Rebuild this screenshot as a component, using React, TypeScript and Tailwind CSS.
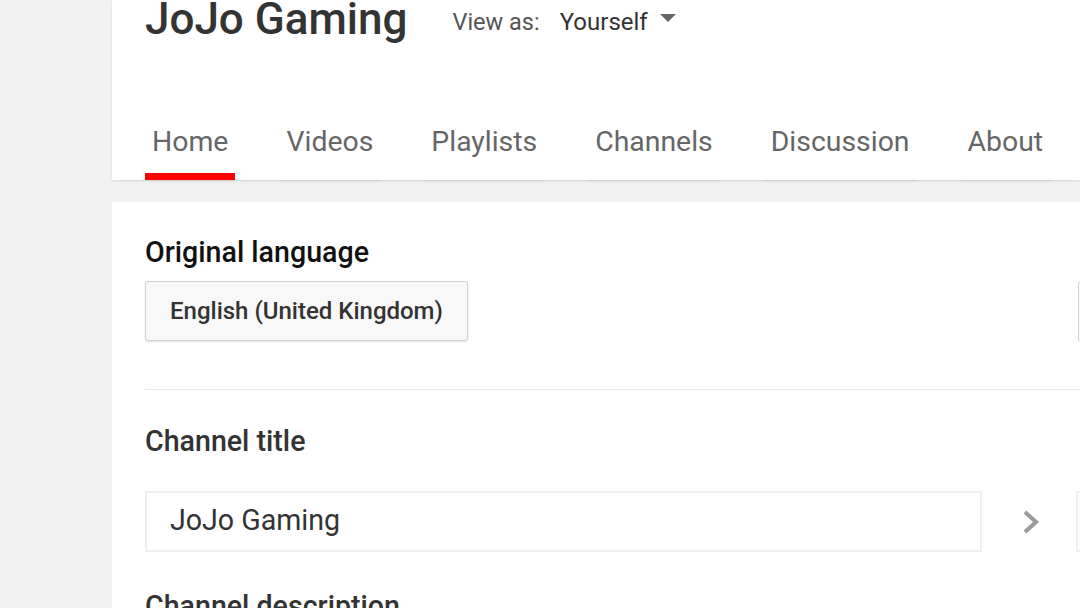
import * as React from "react";

const tabs = ["Home", "Videos", "Playlists", "Channels", "Discussion", "About"];

function Caret() {
  return (
    <svg viewBox="0 0 16 8" className="h-[8px] w-[16px]" aria-hidden="true">
      <path d="M0 0h16L8 8z" fill="#666666" />
    </svg>
  );
}

function Chevron() {
  return (
    <svg viewBox="0 0 18 26" className="h-[26px] w-[18px]" aria-hidden="true">
      <path
        d="M3 3l11 10L3 23"
        fill="none"
        stroke="#9a9a9a"
        strokeWidth="4"
        strokeLinejoin="miter"
      />
    </svg>
  );
}

function Header() {
  return (
    <header className="relative z-10 flex h-[180px] flex-col bg-white pl-[33px] shadow-[0_1px_2px_rgba(0,0,0,0.12)]">
      <div className="-mt-[3px] flex items-end">
        <h1 className="text-[44px] font-medium leading-[44px] text-[#333333]">JoJo Gaming</h1>
        <span className="mb-[7px] ml-[45px] text-[23.5px] leading-[23px] text-[#555555]">View as:</span>
        <span className="mb-[7px] ml-[20px] text-[24px] leading-[23px] text-[#333333]">Yourself</span>
        <span className="mb-[19px] ml-[12px]">
          <Caret />
        </span>
      </div>
      <nav className="mt-auto flex gap-[44px]">
        {tabs.map((t, i) => (
          <div key={t} className="flex flex-col px-[7px] shadow-[0_1px_1px_rgba(0,0,0,0.06)]">
            <span className="text-[28.4px] leading-[28px] text-[#666666]">{t}</span>
            <div className={["-mx-[7px] mt-[17px] h-[7px]", i === 0 ? "bg-[#ff0000]" : ""].join(" ")} />
          </div>
        ))}
      </nav>
    </header>
  );
}

function Content() {
  return (
    <section className="mt-[22px] flex-1 overflow-hidden bg-white pl-[33px] pt-[36px]">
      <div className="flex">
        <div className="w-[931px] shrink-0">
          <h2 className="text-[28.6px] font-medium leading-[28px] text-[#111111]">Original language</h2>
          <button className="mt-[15px] h-[60px] w-[323px] rounded-[3px] border border-[#d3d3d3] bg-[#f8f8f8] pl-[24px] text-left text-[24px] font-medium text-[#333333] shadow-[0_1px_2px_rgba(0,0,0,0.12)]">
            English (United Kingdom)
          </button>
        </div>
        <div className="ml-[2px] mt-[43px] h-[61px] w-[200px] shrink-0 rounded-[3px] border border-[#d3d3d3] bg-[#f8f8f8]" />
      </div>

      <div className="mt-[47px] h-[1px] bg-[#e6e6e6]" />

      <h2 className="mt-[37px] text-[28.6px] font-medium leading-[28px] text-[#333333]">Channel title</h2>
      <div className="mt-[36px] flex items-center">
        <div className="flex h-[61px] w-[837px] shrink-0 items-center border-2 border-[#efefef] pb-[2px] pl-[23px] text-[28.6px] text-[#333333]">
          JoJo Gaming
        </div>
        <div className="flex w-[94px] shrink-0 justify-center pl-[4px]">
          <Chevron />
        </div>
        <div className="h-[61px] w-[200px] shrink-0 border-2 border-[#efefef]" />
      </div>

      <h2 className="mt-[40px] text-[28.6px] font-medium leading-[28px] text-[#333333]">Channel description</h2>
    </section>
  );
}

export default function App() {
  return (
    <div className="flex h-[608px] w-[1080px] overflow-hidden bg-[#f1f1f1] font-['Roboto',sans-serif]">
      <div className="w-[112px] shrink-0" />
      <main className="flex min-w-0 flex-1 flex-col">
        <Header />
        <Content />
      </main>
    </div>
  );
}
